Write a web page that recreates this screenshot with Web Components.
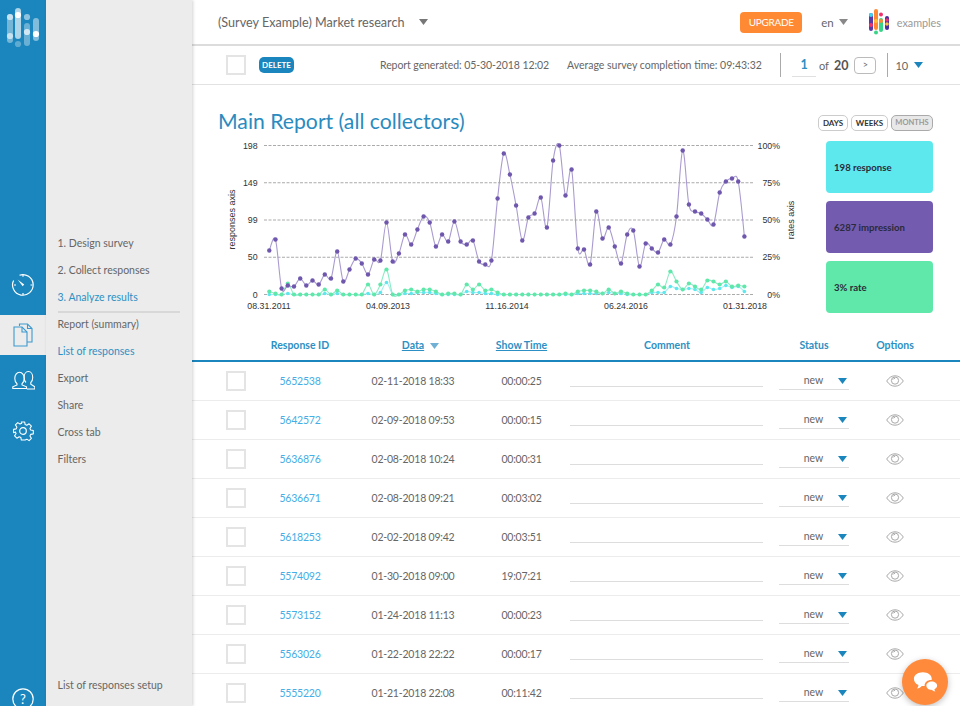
<!DOCTYPE html>
<html>
<head>
<meta charset="utf-8">
<title>Main Report</title>
<style>
html, body { margin: 0; height: 100%; overflow: hidden; background: #fff; }
body { font-family: Lato, "Open Sans", sans-serif; }
</style>
</head>
<body>
<survey-app></survey-app>
<script>
'use strict'

const BLUE = '#1a86bd';

const icons = {
    clock: `<svg width="24" height="24" viewBox="0 0 24 24" fill="none" stroke="#fff" stroke-width="1.2"><path d="M8.5 2.2A10.3 10.3 0 1 1 2.6 7.4"/><path d="M12 1.8v2M3 12h2M19.5 12h2M12 20v2"/><path d="M6.6 6.4l6.6 5.2-1.5 1.6z" fill="#fff" stroke="none"/></svg>`,
    docs: `<svg width="20" height="24" viewBox="0 0 20 24" fill="none" stroke="#3c9ad0" stroke-width="1.1"><path d="M6.5 3V1h8l4.5 4.5V19h-5"/><path d="M14.5 1v4.5H19"/><path d="M1 4h8l5 5v14H1z" fill="#ececec"/><path d="M9 4v5h5"/></svg>`,
    people: `<svg width="23" height="20" viewBox="0 0 23 20" fill="none" stroke="#fff" stroke-width="1.1"><path d="M14 12.5c-1.2-1-1.9-2.800-1.900-5 0-3.300 1.700-6 4.300-6s4.300 2.700 4.300 6c0 2.200-.7 4-1.900 5v1.800l4 2.500V19h-8"/><path d="M5 14.200c-1.400-1-2.200-3-2.200-5.200 0-3.300 1.900-6.200 4.700-6.200s4.700 2.900 4.700 6.200c0 2.200-.8 4.200-2.200 5.200v1.300l4.500 1.800V19H.8v-1.700L5 15.500z" transform="translate(0 -.5)"/></svg>`,
    gear: `<svg width="22" height="22" viewBox="0 0 24 24" fill="none" stroke="#fff" stroke-width="1.3"><circle cx="12" cy="12" r="3.600"/><path d="M10 1h4l.6 3.200 2 .9 2.800-1.800 2.800 2.800-1.800 2.800.9 2 3.200.6v4l-3.200.6-.9 2 1.800 2.800-2.800 2.800-2.800-1.800-2 .9L14 23h-4l-.6-3.200-2-.9-2.800 1.800-2.800-2.800 1.800-2.800-.9-2L.5 14v-4l3.200-.6.9-2-1.800-2.800 2.800-2.800 2.800 1.800 2-.9z" stroke-linejoin="round" transform="translate(1.200 1.200) scale(.9)"/></svg>`,
    eye: `<svg width="18" height="12" viewBox="0 0 18 12" fill="none" stroke="#a9a9a9" stroke-width="1"><path d="M.7 6C3 2.500 5.800.8 9 .8s6 1.700 8.300 5.200C15 9.500 12.200 11.200 9 11.200S3 9.500.7 6z"/><circle cx="9" cy="5.600" r="3.600"/><path d="M6.800 4.600c.5-.9 1.300-1.300 2.300-1.300"/></svg>`,
    chat: `<svg width="25" height="22" viewBox="0 0 28 24" fill="#fff"><path d="M11 1c5.700 0 10 3.200 10 7.300 0 .5-.1 1-.2 1.400-3.700-.4-7.800 2-7.800 6 0 .2 0 .5.100.7-.7.100-1.400.2-2.100.2-.4 0-.8 0-1.200-.1C8.500 18 6.700 19 4.500 19.200c1-1.100 1.500-2.400 1.600-3.900C3 14 1 11.400 1 8.300 1 4.200 5.300 1 11 1z"/><path d="M21 11.300c3.400 0 6 2 6 4.600 0 1.800-1.200 3.300-3 4.100 0 1 .4 1.900 1.100 2.700-1.700-.1-3-.8-3.900-1.900-3.600.3-6.200-2-6.200-4.900 0-2.600 2.600-4.600 6-4.600z"/></svg>`,
};

function triangle(color, w, h) {
    return `<svg width="${w}" height="${h}" viewBox="0 0 10 7" preserveAspectRatio="none" style="display:block"><path d="M0 0h10L5 7z" fill="${color}"/></svg>`;
}


class SideRail extends HTMLElement {
    constructor() {
        super();
        const shadow = this.attachShadow({mode: 'open'});
        shadow.innerHTML = `
            <style>
                :host { display: flex; flex-direction: column; flex: 0 0 46px; width: 46px; height: 706px; background: ${BLUE}; overflow: hidden; }
                .logo { display: block; margin-bottom: auto; }
                .slot { display: flex; align-items: center; justify-content: center; }
                .clock { height: 48px; padding-bottom: 6px; }
                .active { height: 40px; background: #ececec; }
                .tall { height: 50px; }
                .gear { height: 52px; margin-bottom: 230px; }
                .help { height: 23px; margin-bottom: -4px; }
            </style>
            <svg class="logo" width="46" height="50" viewBox="0 0 46 50">
                <rect x="7" y="14" width="6" height="29" rx="3" fill="#fff" opacity=".4"/>
                <circle cx="10" cy="17" r="3.100" fill="#fff" opacity=".6"/>
                <circle cx="10" cy="36" r="3.100" fill="#fff" opacity=".6"/>
                <rect x="15" y="8" width="6" height="31" rx="3" fill="#fff" opacity=".65"/>
                <circle cx="18" cy="15" r="3.100" fill="#fff"/>
                <circle cx="18" cy="44" r="3.100" fill="#fff" opacity=".3"/>
                <circle cx="27" cy="17" r="3.100" fill="#fff" opacity=".5"/>
                <rect x="24" y="23" width="6" height="23" rx="3" fill="#fff" opacity=".35"/>
                <circle cx="27" cy="32" r="3.100" fill="#fff" opacity=".7"/>
                <rect x="33" y="18" width="6" height="23" rx="3" fill="#fff" opacity=".45"/>
                <circle cx="36" cy="34" r="3.100" fill="#fff"/>
            </svg>
            <div class="slot clock">${icons.clock}</div>
            <div class="slot active">${icons.docs}</div>
            <div class="slot tall">${icons.people}</div>
            <div class="slot gear">${icons.gear}</div>
            <div class="slot help"><svg width="22" height="22" viewBox="0 0 22 22"><circle cx="11" cy="11" r="10.200" fill="none" stroke="#fff" stroke-width="1.200"/><text x="11" y="15.500" text-anchor="middle" fill="#fff" font-size="13" font-family="Lato, sans-serif">?</text></svg></div>
        `;
    }
}


class SideNav extends HTMLElement {
    constructor() {
        super();
        const shadow = this.attachShadow({mode: 'open'});
        shadow.innerHTML = `
            <style>
                :host { display: flex; flex-direction: column; flex: 0 0 146px; width: 146px; height: 706px; box-sizing: border-box; padding: 230px 12px 7px 11.500px; background: #ececec; box-shadow: 1px 0 3px rgba(0,0,0,.18); position: relative; font-size: 10.500px; color: #666; }
                div { height: 27px; line-height: 27px; white-space: nowrap; }
                .on { color: #2d90c4; }
                hr { border: 0; border-top: 2px solid #d8d8d8; margin: 0 0 -2px; width: 122px; }
                .last { margin-top: auto; }
            </style>
            <div>1. Design survey</div>
            <div>2. Collect responses</div>
            <div class="on">3. Analyze results</div>
            <hr>
            <div>Report (summary)</div>
            <div class="on">List of responses</div>
            <div>Export</div>
            <div>Share</div>
            <div>Cross tab</div>
            <div>Filters</div>
            <div class="last">List of responses setup</div>
        `;
    }
}


class TopBar extends HTMLElement {
    constructor() {
        super();
        const shadow = this.attachShadow({mode: 'open'});
        shadow.innerHTML = `
            <style>
                :host { display: flex; align-items: center; height: 44px; padding: 0 19px 0 26px; border-bottom: 2px solid #dcdcdc; font-size: 12.600px; color: #666; }
                .arrow { margin-left: 15px; }
                .upgrade { margin-left: auto; width: 62px; height: 21px; line-height: 21px; text-align: center; border-radius: 4px; background: #ff8a33; color: #fff; font-size: 10px; letter-spacing: -.3px; }
                .lang { margin-left: 19px; font-size: 11.500px; }
                .lang-arrow { margin-left: 5px; }
                .brand { margin-left: 21px; flex: none; }
                .examples { margin-left: 8px; font-size: 10.800px; color: #999; }
            </style>
            <span>(Survey Example) Market research</span>
            <span class="arrow">${triangle('#777', 9, 6)}</span>
            <span class="upgrade">UPGRADE</span>
            <span class="lang">en</span>
            <span class="lang-arrow">${triangle('#888', 9, 6)}</span>
            <svg class="brand" width="20" height="26" viewBox="0 0 20 26">
                <rect x="0" y="4" width="4" height="18" rx="2" fill="#5a3aa8"/>
                <circle cx="2" cy="6" r="2" fill="#45d4ee"/>
                <circle cx="2" cy="16" r="2" fill="#f0336e"/>
                <rect x="5" y="0" width="4" height="21" rx="2" fill="#ff8a33"/>
                <circle cx="7" cy="12" r="2" fill="#ffc13a"/>
                <circle cx="7" cy="23.500" r="2" fill="#38d488"/>
                <circle cx="12" cy="5.500" r="2" fill="#f0336e"/>
                <rect x="10" y="9" width="4" height="14" rx="2" fill="#38d488"/>
                <circle cx="12" cy="12" r="2" fill="#ff8a33"/>
                <rect x="16" y="7" width="4" height="14" rx="2" fill="#4a2f9c"/>
                <circle cx="18" cy="11" r="1.800" fill="#f0336e"/>
                <circle cx="18" cy="15" r="1.800" fill="#ffc13a"/>
            </svg>
            <span class="examples">examples</span>
        `;
    }
}


class ReportToolbar extends HTMLElement {
    constructor() {
        super();
        const shadow = this.attachShadow({mode: 'open'});
        shadow.innerHTML = `
            <style>
                :host { display: flex; align-items: center; height: 38px; padding-left: 34px; border-bottom: 1px solid #e2e2e2; font-size: 10.500px; color: #666; }
                .check { width: 16px; height: 16px; border: 2px solid #e4e4e4; margin-right: 13px; flex: none; }
                .delete { width: 35px; height: 16px; line-height: 16px; text-align: center; border-radius: 5px; background: ${BLUE}; color: #fff; font-size: 8px; font-weight: 700; }
                .generated { margin-left: 86px; width: 187px; white-space: nowrap; letter-spacing: -.08px; }
                .average { width: 213px; white-space: nowrap; }
                .pager { display: flex; align-items: center; height: 24px; border-left: 1px solid #aaa; padding-left: 11px; }
                .page { width: 24px; height: 23px; line-height: 23px; text-align: center; border-bottom: 1px solid #e0e0e0; color: #2d90c4; font-size: 12.500px; font-weight: 700; }
                .of { margin-left: 3px; font-size: 11px; }
                .total { margin-left: 5px; font-size: 12.500px; font-weight: 700; color: #555; }
                .next { margin-left: 6px; width: 20px; height: 15px; line-height: 14px; text-align: center; border: 1px solid #bbb; border-radius: 4px; font-size: 9px; }
                .size { display: flex; align-items: center; height: 24px; border-left: 1px solid #aaa; margin-left: 11px; padding-left: 7px; font-size: 11px; }
                .size span { margin-left: 6px; }
            </style>
            <div class="check"></div>
            <div class="delete">DELETE</div>
            <div class="generated">Report generated: 05-30-2018 12:02</div>
            <div class="average">Average survey completion time: 09:43:32</div>
            <div class="pager">
                <div class="page">1</div>
                <div class="of">of</div>
                <div class="total">20</div>
                <div class="next">&gt;</div>
            </div>
            <div class="size">10<span>${triangle(BLUE, 9, 6)}</span></div>
        `;
    }
}


// y in px from the top of the plot, 0 = 198 / 100%
const purples = [105,94,143,140,141,133,140,135,139,129,133,106,136,124,113,118,129,114,115,77,116,108,89,99,84,71,77,101,89,96,76,96,99,95,116,119,115,53,8,29,60,95,72,68,52,82,15,0,50,24,103,104,119,66,93,82,101,118,89,85,121,98,103,107,94,99,71,5,59,66,68,74,79,47,36,33,36,91];
const greens = [146,148,149,138,149,149,149,149,149,144,149,145,149,149,149,149,139,149,139,124,149,149,145,144,146,144,144,146,149,148,148,149,139,144,139,145,144,147,149,149,149,149,149,149,149,149,149,149,148,149,146,145,145,146,148,144,148,146,148,149,149,149,145,139,142,126,136,144,138,141,144,135,136,139,136,141,140,141];
const cyans = [149,149,149,148,149,149,149,149,149,148,149,148,149,149,149,149,148,149,147,137,149,149,148,148,147,147,147,148,149,149,149,149,146,147,147,148,148,149,149,149,149,149,149,149,149,149,149,149,149,149,148,148,148,148,148,147,148,148,149,149,149,149,147,147,147,141,143,144,143,144,147,142,144,143,140,142,141,146];

function spline(points) {
    let d = `M${points[0][0]} ${points[0][1]}`;
    for (let i = 0; i < points.length - 1; ++i) {
        const p0 = points[i - 1] || points[i];
        const p1 = points[i];
        const p2 = points[i + 1];
        const p3 = points[i + 2] || p2;
        const c1x = p1[0] + (p2[0] - p0[0]) / 6;
        const c1y = p1[1] + (p2[1] - p0[1]) / 6;
        const c2x = p2[0] - (p3[0] - p1[0]) / 6;
        const c2y = p2[1] - (p3[1] - p1[1]) / 6;
        d += `C${c1x.toFixed(1)} ${c1y.toFixed(1)} ${c2x.toFixed(1)} ${c2y.toFixed(1)} ${p2[0].toFixed(1)} ${p2[1].toFixed(1)}`;
    }
    return d;
}


class ReportChart extends HTMLElement {
    constructor() {
        super();
        const shadow = this.attachShadow({mode: 'open'});

        // svg sits at x=218 y=135 on the page
        const top = 10.5;
        const toPoints = (list) => list.map((y, i) => [51.3 + i * 6.17, top + y]);
        const series = (list, line, dot, r) => {
            const points = toPoints(list);
            const dots = points.map(p => `<circle cx="${p[0].toFixed(1)}" cy="${p[1]}" r="${r}" fill="${dot}"/>`).join('');
            return `<path d="${spline(points)}" fill="none" stroke="${line}" stroke-width="1.1"/>${dots}`;
        };

        const rows = [['198', '100%'], ['149', '75%'], ['99', '50%'], ['50', '25%'], ['0', '0%']];
        const grid = rows.map((row, i) => {
            const y = top + i * 37.25;
            return `<line x1="46" x2="535" y1="${y}" y2="${y}" stroke="#aaa" stroke-width="1" stroke-dasharray="3 1.500"/>
                <text x="39.600" y="${y + 3.2}" text-anchor="end">${row[0]}</text>
                <text x="562" y="${y + 3.2}" text-anchor="end">${row[1]}</text>`;
        }).join('');

        const dates = [['08.31.2011', 51], ['04.09.2013', 170], ['11.16.2014', 289], ['06.24.2016', 408], ['01.31.2018', 527]];
        const labels = dates.map(d => `<text x="${d[1]}" y="173.500" text-anchor="middle">${d[0]}</text>`).join('');

        shadow.innerHTML = `
            <style>
                :host { display: block; flex: 0 0 590px; width: 590px; height: 180px; }
                svg { display: block; }
                text { font-family: "Liberation Sans", Arial, sans-serif; font-size: 8.800px; fill: #333; }
            </style>
            <svg width="590" height="180" viewBox="0 0 590 180">
                ${grid}
                <text transform="translate(17 84.500) rotate(-90)" text-anchor="middle" style="font-size:9px">responses axis</text>
                <text transform="translate(576 85) rotate(-90)" text-anchor="middle" style="font-size:9px">rates axis</text>
                ${labels}
                ${series(cyans, '#a5eef3', '#5de8ee', 1.8)}
                ${series(greens, '#8debc4', '#5fe8a9', 2.1)}
                ${series(purples, '#a99bd0', '#6f57ae', 2.2)}
            </svg>
        `;
    }
}


class StatCard extends HTMLElement {
    constructor() {
        super();
        const shadow = this.attachShadow({mode: 'open'});
        shadow.innerHTML = `
            <style>
                :host { display: flex; align-items: center; height: 52px; box-sizing: border-box; padding-left: 8px; border-radius: 4px; font-size: 9.600px; font-weight: 700; color: #2a2a3a; background: var(--card, #ccc); }
            </style>
            <slot></slot>
        `;
    }
}


class MainReport extends HTMLElement {
    constructor() {
        super();
        const shadow = this.attachShadow({mode: 'open'});
        shadow.innerHTML = `
            <style>
                :host { display: block; height: 247px; box-sizing: border-box; padding: 23px 27px 0 26px; }
                .head { display: flex; align-items: flex-start; height: 27px; }
                h1 { margin: 0; font-size: 21.200px; line-height: 26px; font-weight: 400; color: #2a8bbf; white-space: nowrap; }
                .ranges { display: flex; gap: 3px; margin-left: auto; padding-top: 7px; }
                .ranges span { height: 14px; line-height: 14px; text-align: center; border: 1px solid #ccc; border-radius: 5px; font-size: 8px; font-weight: 700; color: #333; }
                .ranges .off { background: #e8e8e8; border-color: #aaa; color: #999; font-size: 7.500px; }
                .body { display: flex; }
                .cards { display: flex; flex-direction: column; gap: 8px; width: 107px; margin-left: auto; padding-top: 6px; }
            </style>
            <div class="head">
                <h1>Main Report (all collectors)</h1>
                <div class="ranges"><span style="width:28px">DAYS</span><span style="width:35px">WEEKS</span><span class="off" style="width:40px">MONTHS</span></div>
            </div>
            <div class="body">
                <report-chart></report-chart>
                <div class="cards">
                    <stat-card style="--card:#5de8ee">198 response</stat-card>
                    <stat-card style="--card:#735bb0">6287 impression</stat-card>
                    <stat-card style="--card:#5fe8a9">3% rate</stat-card>
                </div>
            </div>
        `;
    }
}


const COLUMNS = '75px 66px 160px 57px 229px 70px 92px';

class ResponseRow extends HTMLElement {
    constructor() {
        super();
        const shadow = this.attachShadow({mode: 'open'});
        shadow.innerHTML = `
            <style>
                :host { display: grid; grid-template-columns: ${COLUMNS}; align-items: center; height: 38px; border-bottom: 1px solid #ececec; font-size: 10.500px; color: #666; text-align: center; }
                .check { width: 16px; height: 16px; border: 2px solid #e4e4e4; margin-left: 34px; }
                .id { color: #45aee6; letter-spacing: -.2px; }
                .num { letter-spacing: -.2px; margin-top: -1px; }
                .comment { align-self: start; box-sizing: border-box; height: 25px; margin: 0 16px 0 20px; border-bottom: 1px solid #ddd; }
                .status { align-self: start; box-sizing: border-box; display: flex; align-items: center; height: 28px; padding: 8px 2px 0 0; border-bottom: 1px solid #ddd; }
                .status span { flex: 1; padding-left: 10px; }
                .status svg { margin-top: 2px; }
                .eye { display: flex; justify-content: center; margin-top: -1px; }
            </style>
            <div class="check"></div>
            <div class="id num">${this.getAttribute('rid')}</div>
            <div class="num">${this.getAttribute('date')}</div>
            <div class="num">${this.getAttribute('time')}</div>
            <div class="comment"></div>
            <div class="status"><span>new</span>${triangle(BLUE, 9, 6)}</div>
            <div class="eye">${icons.eye}</div>
        `;
    }
}


class ResponseTable extends HTMLElement {
    constructor() {
        super();
        const shadow = this.attachShadow({mode: 'open'});

        const rows = [
            ['5652538', '02-11-2018 18:33', '00:00:25'],
            ['5642572', '02-09-2018 09:53', '00:00:15'],
            ['5636876', '02-08-2018 10:24', '00:00:31'],
            ['5636671', '02-08-2018 09:21', '00:03:02'],
            ['5618253', '02-02-2018 09:42', '00:03:51'],
            ['5574092', '01-30-2018 09:00', '19:07:21'],
            ['5573152', '01-24-2018 11:13', '00:00:23'],
            ['5563026', '01-22-2018 22:22', '00:00:17'],
            ['5555220', '01-21-2018 22:08', '00:11:42'],
        ];

        shadow.innerHTML = `
            <style>
                :host { display: block; font-size: 10.500px; }
                .head { display: grid; grid-template-columns: ${COLUMNS}; align-items: center; height: 30px; box-sizing: border-box; padding-bottom: 2px; border-bottom: 2px solid ${BLUE}; color: #2d90c4; font-weight: 700; text-align: center; }
                .sort { text-decoration: underline; }
                .with-arrow { display: flex; justify-content: center; align-items: center; }
                .with-arrow svg { margin: 1px -15px 0 6px; }
                .comment { padding-left: 5px; }
            </style>
            <div class="head">
                <div></div>
                <div>Response ID</div>
                <div class="with-arrow"><span class="sort">Data</span>${triangle('#6fb0d4', 9, 6)}</div>
                <div class="sort">Show Time</div>
                <div class="comment">Comment</div>
                <div>Status</div>
                <div>Options</div>
            </div>
            ${rows.map(r => `<response-row rid="${r[0]}" date="${r[1]}" time="${r[2]}"></response-row>`).join('')}
        `;
    }
}


class ChatButton extends HTMLElement {
    constructor() {
        super();
        const shadow = this.attachShadow({mode: 'open'});
        shadow.innerHTML = `
            <style>
                :host { position: absolute; right: 12px; top: 659px; display: flex; align-items: center; justify-content: center; width: 46px; height: 46px; border-radius: 50%; background: #ff8a3c; box-shadow: 0 2px 6px rgba(0,0,0,.25); }
            </style>
            ${icons.chat}
        `;
    }
}


class SurveyApp extends HTMLElement {
    constructor() {
        super();
        const shadow = this.attachShadow({mode: 'open'});
        shadow.innerHTML = `
            <style>
                :host { display: flex; width: 960px; height: 706px; overflow: hidden; position: relative; }
                main { flex: 1; min-width: 0; height: 706px; overflow: hidden; }
            </style>
            <side-rail></side-rail>
            <side-nav></side-nav>
            <main>
                <top-bar></top-bar>
                <report-toolbar></report-toolbar>
                <main-report></main-report>
                <response-table></response-table>
            </main>
            <chat-button></chat-button>
        `;
    }
}

customElements.define('side-rail', SideRail);
customElements.define('side-nav', SideNav);
customElements.define('top-bar', TopBar);
customElements.define('report-toolbar', ReportToolbar);
customElements.define('report-chart', ReportChart);
customElements.define('stat-card', StatCard);
customElements.define('main-report', MainReport);
customElements.define('response-row', ResponseRow);
customElements.define('response-table', ResponseTable);
customElements.define('chat-button', ChatButton);
customElements.define('survey-app', SurveyApp);
</script>
</body>
</html>
